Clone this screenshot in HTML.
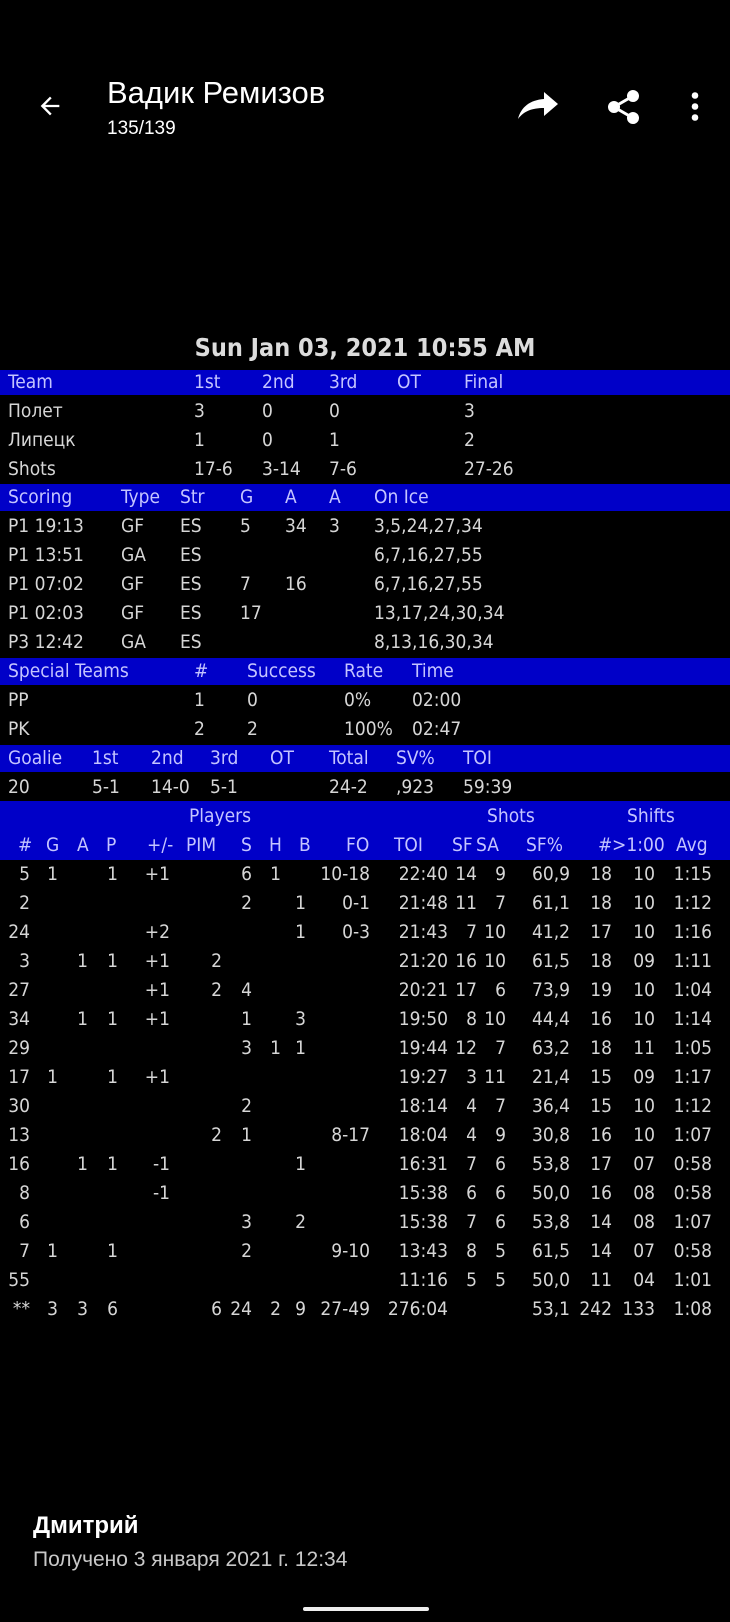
<!DOCTYPE html>
<html><head><meta charset="utf-8"><style>
*{margin:0;padding:0;box-sizing:border-box}
body{width:730px;height:1622px;background:#000;position:relative;overflow:hidden;font-family:"Liberation Sans Narrow","DejaVu Sans Condensed","Liberation Sans",sans-serif;color:#d6d6d6}
.a{position:absolute;white-space:nowrap}
.band{position:absolute;left:0;width:730px;background:#0000c8}
.r{position:absolute;left:0;height:29px;line-height:29px;font-size:19px;width:730px}
.r span{position:absolute;top:0}
.bt{color:#c4c4ff}
.p{position:absolute;left:0;height:29px;line-height:29px;font-size:19px;display:flex}
.p span{display:block;text-align:right}
</style></head><body>
<svg class="a" style="left:36px;top:92px" width="28" height="28" viewBox="0 0 24 24"><path d="M20 11H7.83l5.59-5.59L12 4l-8 8 8 8 1.41-1.41L7.83 13H20v-2z" fill="#fff"/></svg>
<div class="a" style="left:107px;top:75px;font-family:'Liberation Sans',sans-serif;font-size:31px;color:#fff">Вадик Ремизов</div>
<div class="a" style="left:107px;top:118px;font-family:'Liberation Sans',sans-serif;font-size:19px;color:#fff">135/139</div>
<svg class="a" style="left:516px;top:92px" width="44" height="30" viewBox="0 0 44 30"><path d="M42 12 L28 0 V7 C14 8 5 15 2 27 C8 19 16 16 28 16 V24 Z" fill="#fff"/></svg>
<svg class="a" style="left:606px;top:90px" width="36" height="34" viewBox="0 0 36 34"><g fill="#fff" stroke="#fff" stroke-width="3"><circle cx="27" cy="6" r="4.5"/><circle cx="8" cy="17" r="4.5"/><circle cx="27" cy="28" r="4.5"/><path d="M27 6 L8 17 L27 28" fill="none"/></g></svg>
<svg class="a" style="left:689px;top:92px" width="12" height="30"><circle cx="6" cy="3.5" r="3.3" fill="#fff"/><circle cx="6" cy="14.5" r="3.3" fill="#fff"/><circle cx="6" cy="25.5" r="3.3" fill="#fff"/></svg>

<div class="a" style="left:0;width:730px;text-align:center;top:333px;font-size:25px;font-weight:bold;color:#dcdcdc">Sun Jan 03, 2021 10:55 AM</div>

<div class="band" style="top:370px;height:25px"></div>
<div class="r bt" style="top:368px"><span style="left:8px">Team</span><span style="left:194px">1st</span><span style="left:262px">2nd</span><span style="left:329px">3rd</span><span style="left:397px">OT</span><span style="left:464px">Final</span></div>
<div class="r" style="top:397px"><span style="left:8px">Полет</span><span style="left:194px">3</span><span style="left:262px">0</span><span style="left:329px">0</span><span style="left:464px">3</span></div>
<div class="r" style="top:426px"><span style="left:8px">Липецк</span><span style="left:194px">1</span><span style="left:262px">0</span><span style="left:329px">1</span><span style="left:464px">2</span></div>
<div class="r" style="top:455px"><span style="left:8px">Shots</span><span style="left:194px">17-6</span><span style="left:262px">3-14</span><span style="left:329px">7-6</span><span style="left:464px">27-26</span></div>

<div class="band" style="top:484px;height:27px"></div>
<div class="r bt" style="top:483px"><span style="left:8px">Scoring</span><span style="left:121px">Type</span><span style="left:180px">Str</span><span style="left:240px">G</span><span style="left:285px">A</span><span style="left:329px">A</span><span style="left:374px">On Ice</span></div>
<div class="r" style="top:512px"><span style="left:8px">P1 19:13</span><span style="left:121px">GF</span><span style="left:180px">ES</span><span style="left:240px">5</span><span style="left:285px">34</span><span style="left:329px">3</span><span style="left:374px">3,5,24,27,34</span></div>
<div class="r" style="top:541px"><span style="left:8px">P1 13:51</span><span style="left:121px">GA</span><span style="left:180px">ES</span><span style="left:374px">6,7,16,27,55</span></div>
<div class="r" style="top:570px"><span style="left:8px">P1 07:02</span><span style="left:121px">GF</span><span style="left:180px">ES</span><span style="left:240px">7</span><span style="left:285px">16</span><span style="left:374px">6,7,16,27,55</span></div>
<div class="r" style="top:599px"><span style="left:8px">P1 02:03</span><span style="left:121px">GF</span><span style="left:180px">ES</span><span style="left:240px">17</span><span style="left:374px">13,17,24,30,34</span></div>
<div class="r" style="top:628px"><span style="left:8px">P3 12:42</span><span style="left:121px">GA</span><span style="left:180px">ES</span><span style="left:374px">8,13,16,30,34</span></div>

<div class="band" style="top:658px;height:27px"></div>
<div class="r bt" style="top:657px"><span style="left:8px">Special Teams</span><span style="left:194px">#</span><span style="left:247px">Success</span><span style="left:344px">Rate</span><span style="left:412px">Time</span></div>
<div class="r" style="top:686px"><span style="left:8px">PP</span><span style="left:194px">1</span><span style="left:247px">0</span><span style="left:344px">0%</span><span style="left:412px">02:00</span></div>
<div class="r" style="top:715px"><span style="left:8px">PK</span><span style="left:194px">2</span><span style="left:247px">2</span><span style="left:344px">100%</span><span style="left:412px">02:47</span></div>

<div class="band" style="top:745px;height:27px"></div>
<div class="r bt" style="top:744px"><span style="left:8px">Goalie</span><span style="left:92px">1st</span><span style="left:151px">2nd</span><span style="left:210px">3rd</span><span style="left:270px">OT</span><span style="left:329px">Total</span><span style="left:396px">SV%</span><span style="left:463px">TOI</span></div>
<div class="r" style="top:773px"><span style="left:8px">20</span><span style="left:92px">5-1</span><span style="left:151px">14-0</span><span style="left:210px">5-1</span><span style="left:329px">24-2</span><span style="left:396px">,923</span><span style="left:463px">59:39</span></div>

<div class="band" style="top:801px;height:59px"></div>
<div class="r bt" style="top:802px"><span style="left:189px">Players</span><span style="left:487px">Shots</span><span style="left:627px">Shifts</span></div>
<div class="r bt" style="top:831px"><span style="left:18px">#</span><span style="left:46px">G</span><span style="left:77px">A</span><span style="left:106px">P</span><span style="left:147px">+/-</span><span style="left:186px">PIM</span><span style="left:241px">S</span><span style="left:269px">H</span><span style="left:299px">B</span><span style="left:346px">FO</span><span style="left:394px">TOI</span><span style="left:452px">SF</span><span style="left:476px">SA</span><span style="left:526px">SF%</span><span style="left:598px">#</span><span style="left:612px">&gt;1:00</span><span style="left:676px">Avg</span></div>

<div class="p" style="top:860px"><span style="width:30px">5</span><span style="width:28px">1</span><span style="width:30px"></span><span style="width:30px">1</span><span style="width:52px">+1</span><span style="width:52px"></span><span style="width:30px">6</span><span style="width:29px">1</span><span style="width:25px"></span><span style="width:64px">10-18</span><span style="width:78px">22:40</span><span style="width:29px">14</span><span style="width:29px">9</span><span style="width:64px">60,9</span><span style="width:42px">18</span><span style="width:43px">10</span><span style="width:57px">1:15</span></div>
<div class="p" style="top:889px"><span style="width:30px">2</span><span style="width:28px"></span><span style="width:30px"></span><span style="width:30px"></span><span style="width:52px"></span><span style="width:52px"></span><span style="width:30px">2</span><span style="width:29px"></span><span style="width:25px">1</span><span style="width:64px">0-1</span><span style="width:78px">21:48</span><span style="width:29px">11</span><span style="width:29px">7</span><span style="width:64px">61,1</span><span style="width:42px">18</span><span style="width:43px">10</span><span style="width:57px">1:12</span></div>
<div class="p" style="top:918px"><span style="width:30px">24</span><span style="width:28px"></span><span style="width:30px"></span><span style="width:30px"></span><span style="width:52px">+2</span><span style="width:52px"></span><span style="width:30px"></span><span style="width:29px"></span><span style="width:25px">1</span><span style="width:64px">0-3</span><span style="width:78px">21:43</span><span style="width:29px">7</span><span style="width:29px">10</span><span style="width:64px">41,2</span><span style="width:42px">17</span><span style="width:43px">10</span><span style="width:57px">1:16</span></div>
<div class="p" style="top:947px"><span style="width:30px">3</span><span style="width:28px"></span><span style="width:30px">1</span><span style="width:30px">1</span><span style="width:52px">+1</span><span style="width:52px">2</span><span style="width:30px"></span><span style="width:29px"></span><span style="width:25px"></span><span style="width:64px"></span><span style="width:78px">21:20</span><span style="width:29px">16</span><span style="width:29px">10</span><span style="width:64px">61,5</span><span style="width:42px">18</span><span style="width:43px">09</span><span style="width:57px">1:11</span></div>
<div class="p" style="top:976px"><span style="width:30px">27</span><span style="width:28px"></span><span style="width:30px"></span><span style="width:30px"></span><span style="width:52px">+1</span><span style="width:52px">2</span><span style="width:30px">4</span><span style="width:29px"></span><span style="width:25px"></span><span style="width:64px"></span><span style="width:78px">20:21</span><span style="width:29px">17</span><span style="width:29px">6</span><span style="width:64px">73,9</span><span style="width:42px">19</span><span style="width:43px">10</span><span style="width:57px">1:04</span></div>
<div class="p" style="top:1005px"><span style="width:30px">34</span><span style="width:28px"></span><span style="width:30px">1</span><span style="width:30px">1</span><span style="width:52px">+1</span><span style="width:52px"></span><span style="width:30px">1</span><span style="width:29px"></span><span style="width:25px">3</span><span style="width:64px"></span><span style="width:78px">19:50</span><span style="width:29px">8</span><span style="width:29px">10</span><span style="width:64px">44,4</span><span style="width:42px">16</span><span style="width:43px">10</span><span style="width:57px">1:14</span></div>
<div class="p" style="top:1034px"><span style="width:30px">29</span><span style="width:28px"></span><span style="width:30px"></span><span style="width:30px"></span><span style="width:52px"></span><span style="width:52px"></span><span style="width:30px">3</span><span style="width:29px">1</span><span style="width:25px">1</span><span style="width:64px"></span><span style="width:78px">19:44</span><span style="width:29px">12</span><span style="width:29px">7</span><span style="width:64px">63,2</span><span style="width:42px">18</span><span style="width:43px">11</span><span style="width:57px">1:05</span></div>
<div class="p" style="top:1063px"><span style="width:30px">17</span><span style="width:28px">1</span><span style="width:30px"></span><span style="width:30px">1</span><span style="width:52px">+1</span><span style="width:52px"></span><span style="width:30px"></span><span style="width:29px"></span><span style="width:25px"></span><span style="width:64px"></span><span style="width:78px">19:27</span><span style="width:29px">3</span><span style="width:29px">11</span><span style="width:64px">21,4</span><span style="width:42px">15</span><span style="width:43px">09</span><span style="width:57px">1:17</span></div>
<div class="p" style="top:1092px"><span style="width:30px">30</span><span style="width:28px"></span><span style="width:30px"></span><span style="width:30px"></span><span style="width:52px"></span><span style="width:52px"></span><span style="width:30px">2</span><span style="width:29px"></span><span style="width:25px"></span><span style="width:64px"></span><span style="width:78px">18:14</span><span style="width:29px">4</span><span style="width:29px">7</span><span style="width:64px">36,4</span><span style="width:42px">15</span><span style="width:43px">10</span><span style="width:57px">1:12</span></div>
<div class="p" style="top:1121px"><span style="width:30px">13</span><span style="width:28px"></span><span style="width:30px"></span><span style="width:30px"></span><span style="width:52px"></span><span style="width:52px">2</span><span style="width:30px">1</span><span style="width:29px"></span><span style="width:25px"></span><span style="width:64px">8-17</span><span style="width:78px">18:04</span><span style="width:29px">4</span><span style="width:29px">9</span><span style="width:64px">30,8</span><span style="width:42px">16</span><span style="width:43px">10</span><span style="width:57px">1:07</span></div>
<div class="p" style="top:1150px"><span style="width:30px">16</span><span style="width:28px"></span><span style="width:30px">1</span><span style="width:30px">1</span><span style="width:52px">-1</span><span style="width:52px"></span><span style="width:30px"></span><span style="width:29px"></span><span style="width:25px">1</span><span style="width:64px"></span><span style="width:78px">16:31</span><span style="width:29px">7</span><span style="width:29px">6</span><span style="width:64px">53,8</span><span style="width:42px">17</span><span style="width:43px">07</span><span style="width:57px">0:58</span></div>
<div class="p" style="top:1179px"><span style="width:30px">8</span><span style="width:28px"></span><span style="width:30px"></span><span style="width:30px"></span><span style="width:52px">-1</span><span style="width:52px"></span><span style="width:30px"></span><span style="width:29px"></span><span style="width:25px"></span><span style="width:64px"></span><span style="width:78px">15:38</span><span style="width:29px">6</span><span style="width:29px">6</span><span style="width:64px">50,0</span><span style="width:42px">16</span><span style="width:43px">08</span><span style="width:57px">0:58</span></div>
<div class="p" style="top:1208px"><span style="width:30px">6</span><span style="width:28px"></span><span style="width:30px"></span><span style="width:30px"></span><span style="width:52px"></span><span style="width:52px"></span><span style="width:30px">3</span><span style="width:29px"></span><span style="width:25px">2</span><span style="width:64px"></span><span style="width:78px">15:38</span><span style="width:29px">7</span><span style="width:29px">6</span><span style="width:64px">53,8</span><span style="width:42px">14</span><span style="width:43px">08</span><span style="width:57px">1:07</span></div>
<div class="p" style="top:1237px"><span style="width:30px">7</span><span style="width:28px">1</span><span style="width:30px"></span><span style="width:30px">1</span><span style="width:52px"></span><span style="width:52px"></span><span style="width:30px">2</span><span style="width:29px"></span><span style="width:25px"></span><span style="width:64px">9-10</span><span style="width:78px">13:43</span><span style="width:29px">8</span><span style="width:29px">5</span><span style="width:64px">61,5</span><span style="width:42px">14</span><span style="width:43px">07</span><span style="width:57px">0:58</span></div>
<div class="p" style="top:1266px"><span style="width:30px">55</span><span style="width:28px"></span><span style="width:30px"></span><span style="width:30px"></span><span style="width:52px"></span><span style="width:52px"></span><span style="width:30px"></span><span style="width:29px"></span><span style="width:25px"></span><span style="width:64px"></span><span style="width:78px">11:16</span><span style="width:29px">5</span><span style="width:29px">5</span><span style="width:64px">50,0</span><span style="width:42px">11</span><span style="width:43px">04</span><span style="width:57px">1:01</span></div>
<div class="p" style="top:1295px"><span style="width:30px">**</span><span style="width:28px">3</span><span style="width:30px">3</span><span style="width:30px">6</span><span style="width:52px"></span><span style="width:52px">6</span><span style="width:30px">24</span><span style="width:29px">2</span><span style="width:25px">9</span><span style="width:64px">27-49</span><span style="width:78px">276:04</span><span style="width:29px"></span><span style="width:29px"></span><span style="width:64px">53,1</span><span style="width:42px">242</span><span style="width:43px">133</span><span style="width:57px">1:08</span></div>

<div class="a" style="left:33px;top:1512px;font-family:'Liberation Sans',sans-serif;font-size:24px;font-weight:bold;color:#fff">Дмитрий</div>
<div class="a" style="left:33px;top:1548px;font-family:'Liberation Sans',sans-serif;font-size:21px;color:#c8c8c8">Получено 3 января 2021 г. 12:34</div>
<div class="a" style="left:303px;top:1607px;width:126px;height:4px;border-radius:2px;background:#eee"></div>
</body></html>
